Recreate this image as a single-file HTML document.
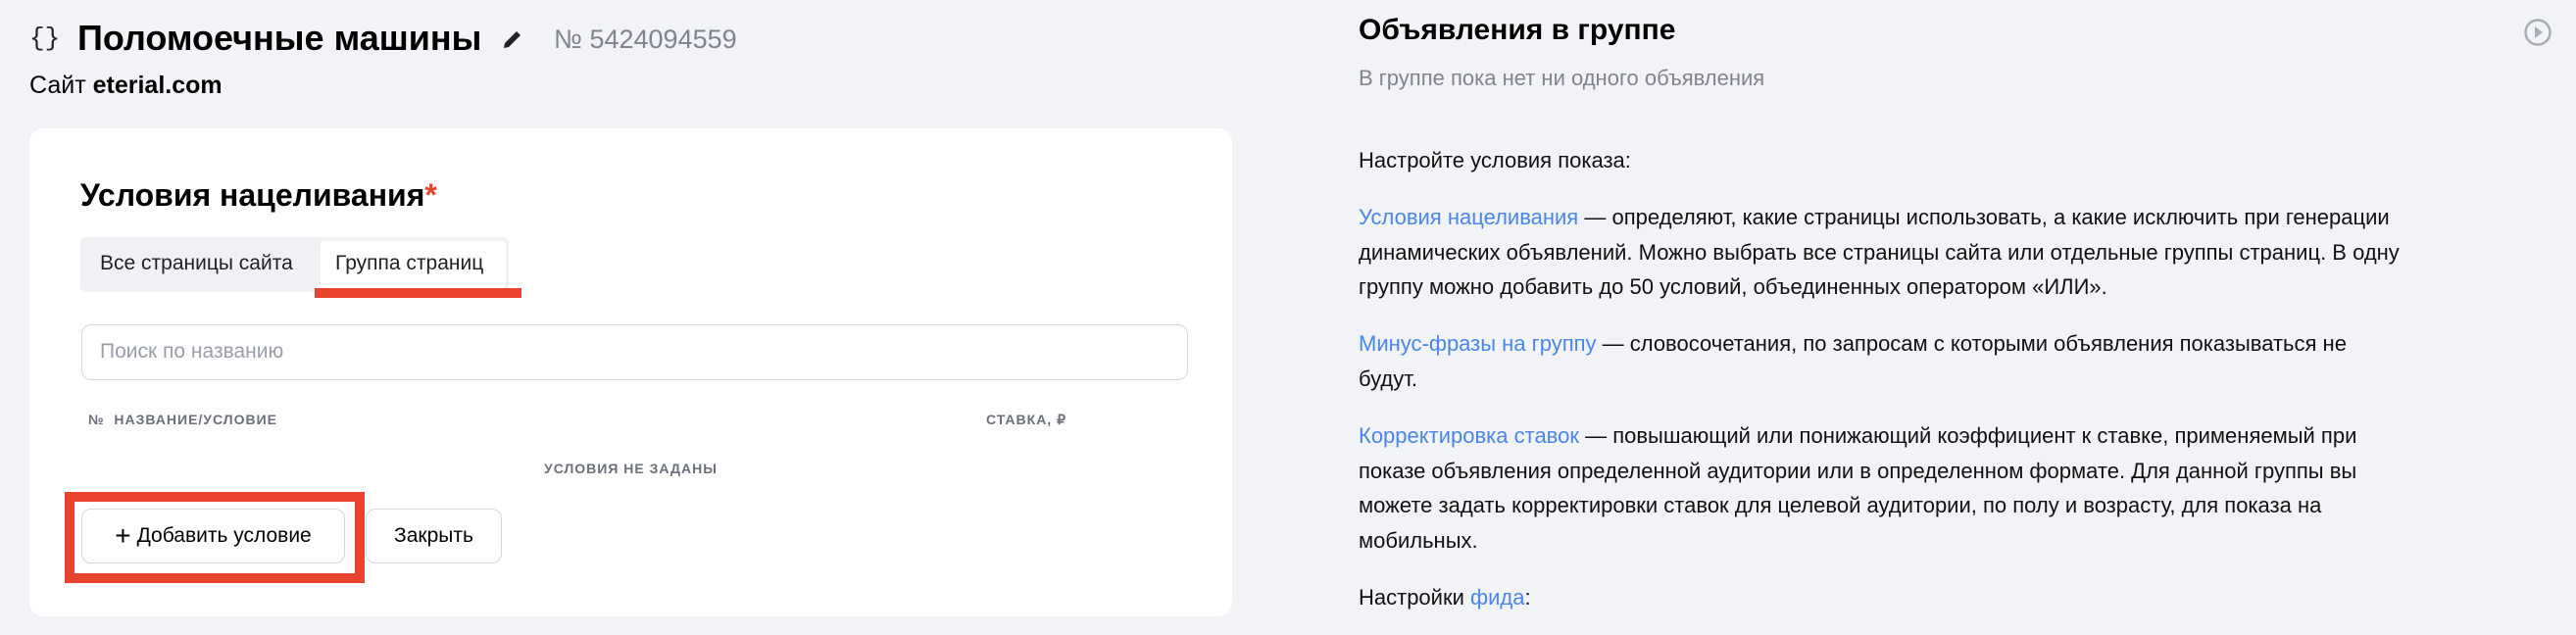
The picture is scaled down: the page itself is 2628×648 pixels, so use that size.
<!DOCTYPE html>
<html><head><meta charset="utf-8"><style>
*{margin:0;padding:0;box-sizing:border-box}
body{width:2628px;height:648px;background:#f2f3f6;font-family:"Liberation Sans","Noto Sans CJK SC",sans-serif;color:#000;position:relative;overflow:hidden}
.a{position:absolute;white-space:nowrap}
.card{position:absolute;left:30px;top:131px;width:1227px;height:498px;background:#fff;border-radius:14px}
.hdr{font-size:14px;font-weight:bold;color:#6b6f7a;letter-spacing:1px}
.btn{position:absolute;background:#fff;border:1.5px solid #d5d7dd;border-radius:10px;font-size:21px;display:flex;align-items:center;justify-content:center}
.p{position:absolute;left:1386px;font-size:22px;line-height:35.5px;color:#111}
.l{color:#4a86e8}
</style></head><body>
<div class="a" style="left:30px;top:24px;font-size:26px;font-family:'Liberation Mono',monospace;color:#222">{}</div>
<div class="a" style="left:79px;top:18px;font-size:36px;font-weight:bold">Поломоечные машины</div>
<svg class="a" style="left:511px;top:28px" width="24" height="24" viewBox="0 0 24 24"><path d="M3 21l1-5L16 4l4 4L8 20z" fill="#222"/></svg>
<div class="a" style="left:565px;top:25px;font-size:27px;color:#80848f">№ 5424094559</div>
<div class="a" style="left:30px;top:73px;font-size:25px">Сайт <b>eterial.com</b></div>

<div class="card"></div>
<div class="a" style="left:82px;top:181px;font-size:32px;font-weight:bold">Условия нацеливания<span style="color:#e8432e">*</span></div>
<div class="a" style="left:82px;top:242px;width:437px;height:56px;background:#f0f1f4;border-radius:6px"></div>
<div class="a" style="left:327px;top:246px;width:189px;height:48px;background:#fff;border-radius:4px"></div>
<div class="a" style="left:102px;top:257px;font-size:21px;color:#222">Все страницы сайта</div>
<div class="a" style="left:342px;top:257px;font-size:21px;color:#222">Группа страниц</div>
<div class="a" style="left:321px;top:294px;width:211px;height:10px;background:#e8432e"></div>
<div class="a" style="left:83px;top:331px;width:1129px;height:57px;border:1.5px solid #d5d7dd;border-radius:10px"></div>
<div class="a" style="left:102px;top:347px;font-size:21px;color:#9a9ea8">Поиск по названию</div>
<div class="a hdr" style="left:90px;top:420px">№&nbsp; НАЗВАНИЕ/УСЛОВИЕ</div>
<div class="a hdr" style="left:1006px;top:420px">СТАВКА, ₽</div>
<div class="a hdr" style="left:555px;top:470px">УСЛОВИЯ НЕ ЗАДАНЫ</div>
<div class="a" style="left:66px;top:502px;width:306px;height:93px;border:10px solid #e8432e"></div>
<div class="btn" style="left:83px;top:519px;width:269px;height:56px"><span style="font-size:28px;margin-right:6px">+</span>Добавить условие</div>
<div class="btn" style="left:373px;top:519px;width:139px;height:56px">Закрыть</div>

<div class="a" style="left:1386px;top:14px;font-size:30px;font-weight:bold">Объявления в группе</div>
<div class="a" style="left:1386px;top:67px;font-size:22px;color:#80848f">В группе пока нет ни одного объявления</div>
<svg class="a" style="left:2574px;top:18px" width="30" height="30" viewBox="0 0 30 30"><circle cx="15" cy="15" r="12.5" fill="none" stroke="#a9adb8" stroke-width="2.5"/><path d="M12 9l8 6-8 6z" fill="#a9adb8"/></svg>
<div class="p" style="top:146px">Настройте условия показа:</div>
<div class="p" style="top:204px"><span class="l">Условия нацеливания</span> — определяют, какие страницы использовать, а какие исключить при генерации<br>динамических объявлений. Можно выбрать все страницы сайта или отдельные группы страниц. В одну<br>группу можно добавить до 50 условий, объединенных оператором «ИЛИ».</div>
<div class="p" style="top:333px"><span class="l">Минус-фразы на группу</span> — словосочетания, по запросам с которыми объявления показываться не<br>будут.</div>
<div class="p" style="top:427px"><span class="l">Корректировка ставок</span> — повышающий или понижающий коэффициент к ставке, применяемый при<br>показе объявления определенной аудитории или в определенном формате. Для данной группы вы<br>можете задать корректировки ставок для целевой аудитории, по полу и возрасту, для показа на<br>мобильных.</div>
<div class="p" style="top:592px">Настройки <span class="l">фида</span>:</div>
</body></html>
